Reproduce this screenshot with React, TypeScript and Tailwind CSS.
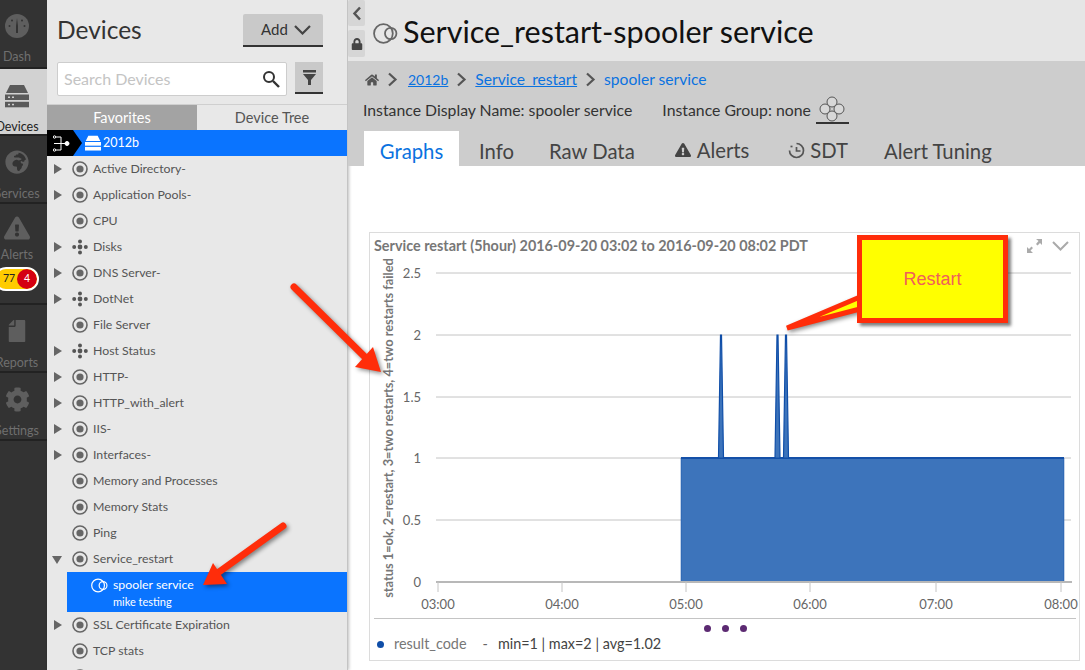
import { FaCog, FaExclamationTriangle, FaFile, FaGlobeAfrica, FaHome, FaLock } from "react-icons/fa";

const font = "font-['Lato','Open_Sans',sans-serif]";

type TreeRow = { name: string; icon: "target" | "flower"; arrow?: "right" | "down" };

const treeRows: TreeRow[] = [
  { name: "Active Directory-", icon: "target", arrow: "right" },
  { name: "Application Pools-", icon: "target", arrow: "right" },
  { name: "CPU", icon: "target" },
  { name: "Disks", icon: "flower", arrow: "right" },
  { name: "DNS Server-", icon: "target", arrow: "right" },
  { name: "DotNet", icon: "flower", arrow: "right" },
  { name: "File Server", icon: "target" },
  { name: "Host Status", icon: "flower", arrow: "right" },
  { name: "HTTP-", icon: "target", arrow: "right" },
  { name: "HTTP_with_alert", icon: "target", arrow: "right" },
  { name: "IIS-", icon: "target", arrow: "right" },
  { name: "Interfaces-", icon: "target", arrow: "right" },
  { name: "Memory and Processes", icon: "target" },
  { name: "Memory Stats", icon: "target" },
  { name: "Ping", icon: "target" },
  { name: "Service_restart", icon: "target", arrow: "down" },
];

function TargetIcon() {
  return (
    <svg width="16" height="16" viewBox="0 0 16 16" className="shrink-0">
      <circle cx="8" cy="8" r="7" fill="none" stroke="#666" strokeWidth="1.6" />
      <circle cx="8" cy="8" r="3.6" fill="#666" />
    </svg>
  );
}

function FlowerIcon() {
  return (
    <svg width="16" height="16" viewBox="0 0 16 16" className="shrink-0" fill="#555">
      <circle cx="8" cy="8" r="2.4" />
      <circle cx="8" cy="2.4" r="2" />
      <circle cx="8" cy="13.6" r="2" />
      <circle cx="2.2" cy="8" r="2" />
      <circle cx="13.8" cy="8" r="2" />
    </svg>
  );
}

function ServiceIcon({ color, size }: { color: string; size: number }) {
  return (
    <svg width={size} height={size} viewBox="0 0 24 24" fill="none" stroke={color} strokeWidth="1.7" className="shrink-0">
      <circle cx="10" cy="12" r="9" />
      <circle cx="17" cy="12" r="5.5" />
    </svg>
  );
}

function ServerIcon({ color, w, h }: { color: string; w: number; h: number }) {
  return (
    <svg width={w} height={h} viewBox="0 0 24 24" fill={color} className="shrink-0">
      <path d="M5 1h14l4 8H1z" />
      <rect x="0" y="10.5" width="24" height="5.5" />
      <rect x="0" y="17.8" width="24" height="5.5" />
      <rect x="3" y="12.5" width="2" height="1.5" fill="#fff" opacity="0.7" />
      <rect x="7" y="12.5" width="2" height="1.5" fill="#fff" opacity="0.7" />
      <rect x="3" y="19.8" width="2" height="1.5" fill="#fff" opacity="0.7" />
      <rect x="7" y="19.8" width="2" height="1.5" fill="#fff" opacity="0.7" />
    </svg>
  );
}

function NavItem({ label, active, className, children }: { label: string; active?: boolean; className: string; children: React.ReactNode }) {
  return (
    <div className={`relative flex flex-col items-center overflow-hidden border-b-2 ${active ? "border-[#222] bg-[#d2d2d2]" : "border-[#222] bg-[#333]"} ${className}`}>
      <div className="flex w-[34px] flex-col items-center self-start">
        <div className="flex h-[48px] items-center justify-center">{children}</div>
        <div className={`flex w-[34px] justify-center whitespace-nowrap text-[12.5px] leading-[16px] ${active ? "text-[#222]" : "text-[#6f6f6f]"}`}>{label}</div>
      </div>
    </div>
  );
}

function LeftNav() {
  return (
    <div className="flex w-[47px] shrink-0 flex-col bg-[#333]">
      <NavItem label="Dash" className="h-[69px] pt-[1px]">
        <svg width="24" height="24" viewBox="0 0 24 24" className="mt-[1px]">
          <circle cx="12" cy="12" r="12" fill="#5e5e5e" />
          <path d="M11 12l1-8 1 8v7h-2z" fill="#333" />
          <circle cx="4.5" cy="12" r="1" fill="#333" />
          <circle cx="19.5" cy="12" r="1" fill="#333" />
          <circle cx="7" cy="6.5" r="1" fill="#333" />
          <circle cx="17" cy="6.5" r="1" fill="#333" />
        </svg>
      </NavItem>
      <NavItem label="Devices" active className="h-[67px] pt-[2px]">
        <div className="mt-[2px]"><ServerIcon color="#5a5a5a" w={24} h={24} /></div>
      </NavItem>
      <NavItem label="Services" className="h-[68px] pt-[2px]">
        <FaGlobeAfrica size={24} color="#5e5e5e" />
      </NavItem>
      <div className="relative h-[101px] overflow-hidden border-b-2 border-[#222] bg-[#333]">
        <div className="flex w-[34px] flex-col items-center">
          <div className="flex h-[43px] items-center justify-center pt-[5px]">
            <FaExclamationTriangle size={26} color="#5e5e5e" />
          </div>
          <div className="flex w-[34px] justify-center text-[12.5px] leading-[16px] text-[#6f6f6f]">Alerts</div>
        </div>
        <div className="absolute left-[-6px] top-[63px] flex h-[24px] w-[45px] items-center overflow-hidden rounded-full border-2 border-white bg-[#ffcc00]">
          <span className="ml-[7px] text-[10.5px] text-[#222]">77</span>
          <span className="absolute right-0 flex h-[20px] w-[20px] items-center justify-center rounded-full bg-[#d40012] text-[10.5px] text-white">4</span>
        </div>
      </div>
      <NavItem label="Reports" className="h-[68px] pt-[2px]">
        <FaFile size={22} color="#5e5e5e" className="-scale-x-100" />
      </NavItem>
      <NavItem label="Settings" className="h-[68px] pt-[2px]">
        <FaCog size={25} color="#5e5e5e" />
      </NavItem>
    </div>
  );
}

function Sidebar() {
  return (
    <div className="flex w-[301px] shrink-0 flex-col overflow-hidden border-r border-[#c4c4c4] bg-[#e8e8e8] shadow-[1px_0_3px_rgba(0,0,0,0.25)]">
      <div className="flex h-[62px] shrink-0 items-start justify-between pl-[10px] pr-[24px]">
        <div className="mt-[12px] text-[24.5px] leading-[36px] text-[#333]">Devices</div>
        <div className="mt-[14px] flex h-[33px] w-[80px] items-center justify-center gap-[6px] rounded-t-[2px] border-b-2 border-[#333] bg-[#c9c9c9] pl-[6px] text-[15px] text-[#333]">
          Add
          <svg width="17" height="10" viewBox="0 0 17 10" fill="none" stroke="#444" strokeWidth="2.2"><path d="M1 1l7.5 7.5L16 1" /></svg>
        </div>
      </div>
      <div className="flex h-[43px] shrink-0 items-start justify-between border-b border-[#cfcfcf] pl-[10px] pr-[24px]">
        <div className="flex h-[34px] w-[230px] items-center justify-between rounded-[2px] border border-[#cdcdcd] bg-white pl-[6px] pr-[6px] text-[16px] text-[#c4c4c4]">
          Search Devices
          <svg width="18" height="18" viewBox="0 0 18 18" fill="none" stroke="#333"><circle cx="7" cy="7" r="5" strokeWidth="2" /><path d="M11 11l6 6" strokeWidth="2.4" /></svg>
        </div>
        <div className="flex h-[32px] w-[28px] items-center justify-center border-b-2 border-[#333] bg-[#c9c9c9]">
          <svg width="13" height="15" viewBox="0 0 13 15" fill="#444"><rect y="0" width="13" height="2.5" /><path d="M0 4h13L8 10v5H5v-5z" /></svg>
        </div>
      </div>
      <div className="flex h-[25px] shrink-0 text-[14.5px] leading-[25px]">
        <div className="w-[150px] bg-[#a3a3a3] text-center text-white">Favorites</div>
        <div className="w-[150px] text-center text-[#555]">Device Tree</div>
      </div>
      <div className="flex h-[26px] shrink-0 items-center bg-[#0a74ff] text-[12.5px] text-white">
        <div className="relative flex h-[26px] w-[26px] items-center bg-black pl-[6px]">
          <svg width="17" height="17" viewBox="0 0 17 17" fill="none" stroke="#fff" strokeWidth="1"><circle cx="1.5" cy="2" r="1.2" /><circle cx="1.5" cy="15" r="1.2" /><path d="M3 2h5v13H3M1 8.5h15" /><circle cx="14" cy="8.5" r="2" fill="#fff" /></svg>
          <div className="absolute left-[26px] top-0 h-0 w-0 border-y-[13px] border-l-[9px] border-y-transparent border-l-black" />
        </div>
        <div className="ml-[12px]"><ServerIcon color="#fff" w={16} h={16} /></div>
        <span className="ml-[2px]">2012b</span>
      </div>
      {treeRows.map((row) => (
        <div key={row.name} className="flex h-[26px] shrink-0 items-center text-[12.3px] text-[#555]">
          <div className="flex w-[25px] justify-end pr-[10px]">
            {row.arrow === "right" && <div className="h-0 w-0 border-y-[5px] border-l-[8px] border-y-transparent border-l-[#666]" />}
            {row.arrow === "down" && <div className="mt-[1px] h-0 w-0 border-x-[5px] border-t-[8px] border-x-transparent border-t-[#666]" />}
          </div>
          {row.icon === "target" ? <TargetIcon /> : <FlowerIcon />}
          <span className="ml-[5px]">{row.name}</span>
        </div>
      ))}
      <div className="ml-[20px] flex h-[40px] shrink-0 flex-col bg-[#0a74ff] pl-[24px] pt-[4px] text-white">
        <div className="flex h-[18px] items-center gap-[4px] text-[12.3px]">
          <ServiceIcon color="#fff" size={17} />
          <span className="ml-[1px]">spooler service</span>
        </div>
        <div className="pl-[22px] text-[11px] leading-[16px]">mike testing</div>
      </div>
      {["SSL Certificate Expiration", "TCP stats", ""].map((name) => (
        <div key={name} className="flex h-[26px] shrink-0 items-center text-[12.3px] text-[#555]">
          <div className="flex w-[25px] justify-end pr-[10px]">
            {name.startsWith("SSL") && <div className="h-0 w-0 border-y-[5px] border-l-[8px] border-y-transparent border-l-[#666]" />}
          </div>
          <TargetIcon />
          <span className="ml-[5px]">{name}</span>
        </div>
      ))}
    </div>
  );
}

function Header() {
  return (
    <>
      <div className="relative flex h-[61px] shrink-0 items-center bg-[#e6e6e6] pl-[25px]">
        <div className="absolute left-0 top-0 flex h-[26px] w-[17px] items-center justify-center rounded-[2px] bg-[#d6d6d6]">
          <svg width="10" height="15" viewBox="0 0 10 15" fill="none" stroke="#555" strokeWidth="2.5"><path d="M8 1.5L2.5 7.5 8 13.5" /></svg>
        </div>
        <div className="absolute left-0 top-[30px] flex h-[27px] w-[17px] items-center justify-center rounded-[2px] bg-[#d6d6d6]">
          <FaLock size={12} color="#444" />
        </div>
        <div className="mt-[5px]"><ServiceIcon color="#666" size={25} /></div>
        <div className="ml-[5px] text-[30.5px] leading-[40px] text-[#111]">Service_restart-spooler service</div>
      </div>
      <div className="h-[105px] shrink-0 bg-[#cdcdcd] pl-[15px]">
        <div className="flex h-[35px] items-center pt-[2px] text-[15.6px] text-[#0a72e0]">
          <FaHome size={14} color="#555" className="ml-[2px]" />
          <Chevron />
          <span className="ml-[2px] text-[14px] underline">2012b</span>
          <Chevron />
          <span className="underline">Service_restart</span>
          <Chevron />
          <span>spooler service</span>
        </div>
        <div className="flex h-[28px] items-center text-[15.8px] text-[#333]">
          <span>Instance Display Name: spooler service</span>
          <span className="ml-[30px]">Instance Group: none</span>
          <div className="ml-[5px] flex h-[28px] w-[33px] items-center justify-center border-b-2 border-[#333]">
            <svg width="28" height="26" viewBox="0 0 28 26" fill="#d8d8d8" stroke="#555" strokeWidth="1"><circle cx="14" cy="6" r="5" /><circle cx="14" cy="20" r="5" /><circle cx="7" cy="13" r="5" /><circle cx="21" cy="13" r="5" /></svg>
          </div>
        </div>
        <div className="flex h-[42px] items-end text-[20.3px] leading-[35px] text-[#444]">
          <div className="ml-[1px] h-[35px] w-[95px] bg-white pt-[3px] text-center text-[#0a72e0]">Graphs</div>
          <span className="ml-[20px] h-[35px] pt-[3px]">Info</span>
          <span className="ml-[35px] h-[35px] pt-[3px]">Raw Data</span>
          <span className="ml-[40px] flex h-[35px] items-center gap-[6px] pt-[3px]"><FaExclamationTriangle size={16} color="#444" />Alerts</span>
          <span className="ml-[39px] flex h-[35px] items-center gap-[5px] pt-[3px]">
            <svg width="17" height="17" viewBox="0 0 17 17" fill="none" stroke="#555" strokeWidth="1.7"><path d="M8.5 1.5a7 7 0 1 1-7 7" /><path d="M8.5 5v4h4" /><path d="M2.5 4.5l2 0" /></svg>
            SDT
          </span>
          <span className="ml-[36px] h-[35px] pt-[3px]">Alert Tuning</span>
        </div>
      </div>
    </>
  );
}

function Chevron() {
  return (
    <svg width="11" height="15" viewBox="0 0 11 15" fill="none" stroke="#555" strokeWidth="2.2" className="mx-[8px]"><path d="M2 1.5l6.5 6-6.5 6" /></svg>
  );
}

function Chart() {
  const gridY = [273, 335, 397, 458, 520];
  const yLabels = ["2.5", "2", "1.5", "1", "0.5"];
  const hours = [
    { x: 438, label: "03:00" },
    { x: 562, label: "04:00" },
    { x: 686, label: "05:00" },
    { x: 810, label: "06:00" },
    { x: 936, label: "07:00" },
    { x: 1061, label: "08:00" },
  ];
  const spikes = [721, 777.5, 786];
  return (
    <svg width="709" height="363" viewBox="370 255 709 363" className="block shrink-0 font-['Lato',sans-serif]">
      {gridY.map((y) => (
        <line key={y} x1="436" x2="1071" y1={y} y2={y} stroke="#c4c4c4" strokeWidth="1" />
      ))}
      {yLabels.map((l, i) => (
        <text key={l} x="421" y={gridY[i] + 5} textAnchor="end" fontSize="13" fill="#666">{l}</text>
      ))}
      <text x="421" y="587" textAnchor="end" fontSize="13" fill="#666">0</text>
      <text transform="translate(393 428) rotate(-90)" textAnchor="middle" fontSize="12.8" fontWeight="700" fill="#777">
        status 1=ok, 2=restart, 3=two restarts, 4=two restarts failed
      </text>
      <rect x="681" y="458" width="383" height="124" fill="#3d74bb" />
      <path d="M681 458H1064" stroke="#1450a8" strokeWidth="2" />
      <path d="M681 582V458M1064 458V582" stroke="#1450a8" strokeWidth="1" opacity="0.5" />
      {spikes.map((x) => (
        <path key={x} d={`M${x - 2.5} 458L${x - 0.5} 335H${x + 0.5}L${x + 2.5} 458Z`} fill="#3d74bb" stroke="#0f4ea8" strokeWidth="1.2" />
      ))}
      <line x1="436" x2="1072" y1="582" y2="582" stroke="#b8b8b8" strokeWidth="2" />
      {hours.map((h) => (
        <g key={h.label}>
          <line x1={h.x} x2={h.x} y1="582" y2="592" stroke="#c4c4c4" />
          <text x={h.x} y="609" textAnchor="middle" fontSize="13" fill="#666">{h.label}</text>
        </g>
      ))}
    </svg>
  );
}

function Annotations() {
  return (
    <>
      <svg width="1085" height="670" viewBox="0 0 1085 670" className="pointer-events-none absolute left-0 top-0 drop-shadow-[2px_2px_2px_rgba(0,0,0,0.45)]">
        <path d="M294 287L369 361" stroke="#ff2d0a" strokeWidth="7" strokeLinecap="round" fill="none" />
        <path d="M381 372L373 347L355 367Z" fill="#ff2d0a" />
        <path d="M283 526L219 572" stroke="#ff2d0a" strokeWidth="7" strokeLinecap="round" fill="none" />
        <path d="M203 585L213 563L227 584Z" fill="#ff2d0a" />
        <path d="M860 297L787 328L860 309Z" fill="#ffff00" stroke="#ff2d0a" strokeWidth="5" strokeLinejoin="miter" />
      </svg>
      <div className="absolute left-[857px] top-[235px] flex h-[88px] w-[151px] items-center justify-center border-[5px] border-[#ff2d0a] bg-[#ffff00] font-['Liberation_Sans',sans-serif] text-[18px] text-[#f0605a] shadow-[3px_3px_3px_rgba(0,0,0,0.5)]">
        Restart
      </div>
    </>
  );
}

export default function App() {
  return (
    <div className={`relative flex h-[670px] w-[1085px] overflow-hidden bg-white ${font}`}>
      <LeftNav />
      <Sidebar />
      <div className="flex min-w-0 flex-1 flex-col">
        <Header />
        <div className="ml-[21px] mr-[5px] mt-[66px] flex h-[429px] shrink-0 flex-col border border-[#dcdcdc] bg-white">
          <div className="relative flex h-[22px] shrink-0 items-end justify-between pl-[4px] text-[14.4px] font-bold leading-[18px] text-[#777]">
            <span>Service restart (5hour) 2016-09-20 03:02 to 2016-09-20 08:02 PDT</span>
            <div className="absolute right-[10px] top-[6px] flex items-center gap-[10px]">
              <svg width="15" height="14" viewBox="0 0 15 14" fill="#aaa"><path d="M9 0h6v6l-2-2-2.5 2.5-1.5-1.5L11.5 2zM6 14H0V8l2 2 2.5-2.5L6 9l-2.5 2.5z" /></svg>
              <svg width="17" height="10" viewBox="0 0 17 10" fill="none" stroke="#aaa" strokeWidth="2"><path d="M1 1l7.5 7.5L16 1" /></svg>
            </div>
          </div>
          <Chart />
          <div className="ml-[4px] mr-[3px] flex-1 border-t border-[#c4c4c4]">
            <div className="flex h-[18px] items-center gap-[11px] pl-[330px]">
              <div className="h-[7px] w-[7px] rounded-full bg-[#5c2a72]" />
              <div className="h-[7px] w-[7px] rounded-full bg-[#5c2a72]" />
              <div className="h-[7px] w-[7px] rounded-full bg-[#5c2a72]" />
            </div>
            <div className="flex items-center pl-[3px] text-[14.4px] leading-[14px] text-[#666]">
              <div className="mr-[10px] h-[7px] w-[7px] rounded-full bg-[#0f4ea8]" />
              <span className="text-[#777]">result_code</span>
              <span className="ml-[16px]">-</span>
              <span className="ml-[10px] text-[#444]">min=1 | max=2 | avg=1.02</span>
            </div>
          </div>
        </div>
      </div>
      <Annotations />
    </div>
  );
}
